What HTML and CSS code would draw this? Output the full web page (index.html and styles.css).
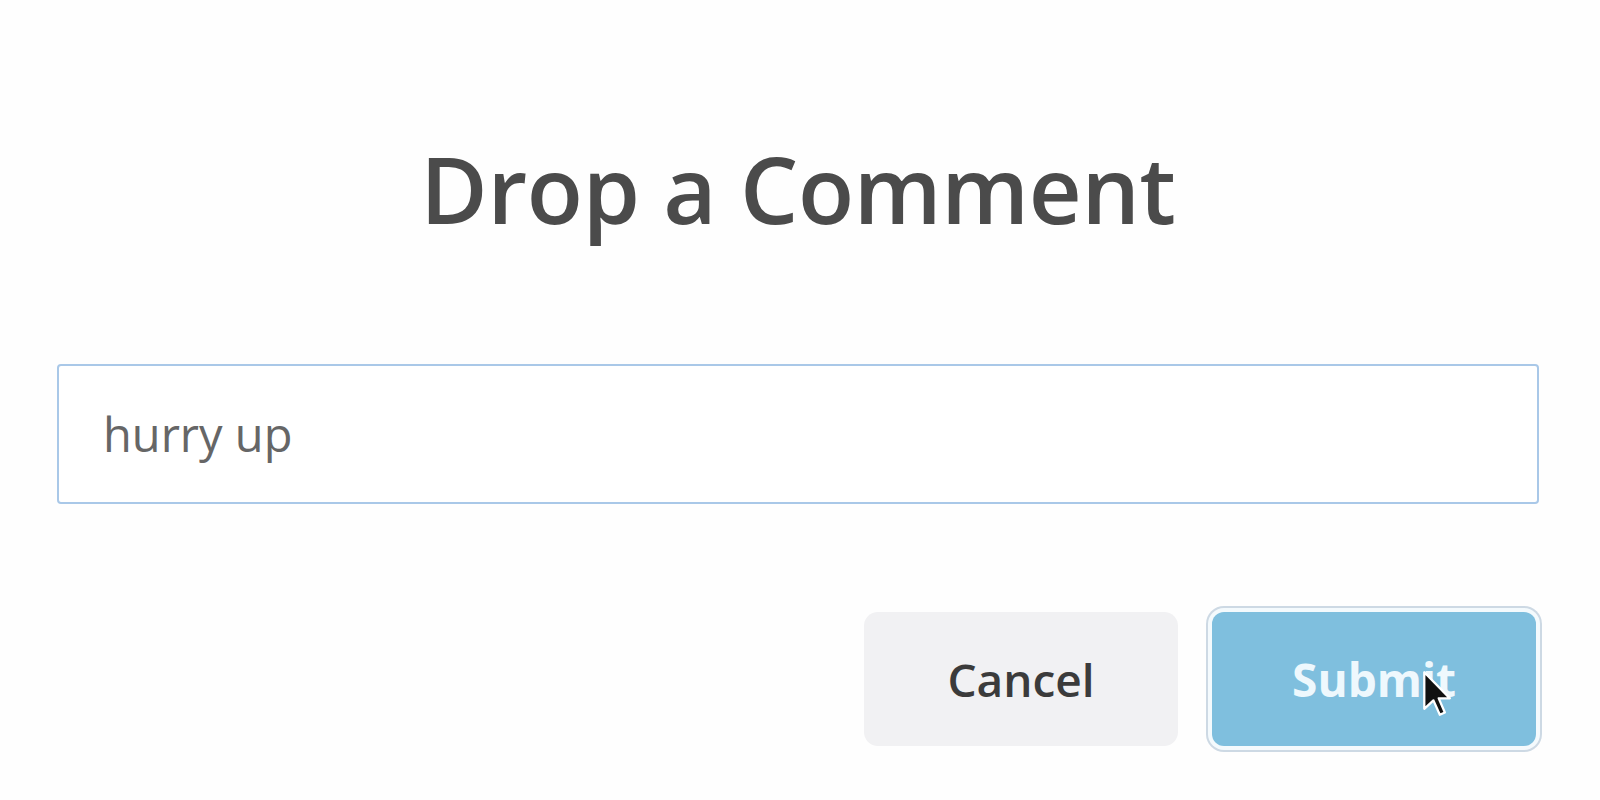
FILE: index.html
```html
<!DOCTYPE html>
<html>
<head>
<meta charset="utf-8">
<link rel="stylesheet" href="styles.css">
</head>
<body>
<div class="dialog">
  <h1 class="title">Drop a Comment</h1>
  <input class="comment" type="text" value="hurry up">
  <div class="actions">
    <button class="btn btn-cancel">Cancel</button>
    <button class="btn btn-submit">Submit
      <svg class="cursor" width="32" height="50" viewBox="-1 -1 14 21">
        <path d="M0 0 L0 16 L4 12.3 L6.8 18.6 L9 17.6 L6.3 11.4 L11.2 11.4 Z" fill="#111" stroke="#fff" stroke-width="1" stroke-linejoin="round"/>
      </svg>
    </button>
  </div>
</div>
</body>
</html>
```
FILE: styles.css
```css
html, body {
  margin: 0;
  padding: 0;
  background: #fefefe;
  width: 1600px;
  height: 800px;
  overflow: hidden;
}
.dialog {
  box-sizing: border-box;
  width: 1600px;
  padding: 134px 61px 0 57px;
  display: flex;
  flex-direction: column;
  font-family: "Open Sans", sans-serif;
}
.title {
  margin: 0;
  text-align: center;
  font-size: 92px;
  line-height: 110px;
  font-weight: 600;
  color: #4b4b4b;
  letter-spacing: -0.3px;
}
.comment {
  margin-top: 120px;
  box-sizing: border-box;
  width: 100%;
  height: 140px;
  border: 2px solid #a9c8e8;
  border-radius: 4px;
  padding: 0 0 0 44px;
  font-family: "Open Sans", sans-serif;
  font-size: 47px;
  color: #666;
  background: #fff;
  outline: none;
}
.actions {
  margin-top: 108px;
  display: flex;
  justify-content: flex-end;
  align-items: center;
  gap: 34px;
  padding-right: 3px;
}
.btn {
  box-sizing: border-box;
  height: 134px;
  border: none;
  font-family: "Open Sans", sans-serif;
  font-size: 46px;
  padding: 0;
  cursor: default;
}
.btn-cancel {
  width: 314px;
  border-radius: 14px;
  background: #f1f1f3;
  color: #3b3b3b;
  font-weight: 600;
}
.btn-submit {
  position: relative;
  width: 324px;
  border-radius: 12px;
  background: #7fbfde;
  color: #eef8fd;
  font-weight: 700;
  box-shadow: 0 0 0 4px #f4fafd, 0 0 0 6px #cdd9e4;
}
.cursor {
  position: absolute;
  left: 210px;
  top: 57px;
  filter: blur(0.6px);
}
```
